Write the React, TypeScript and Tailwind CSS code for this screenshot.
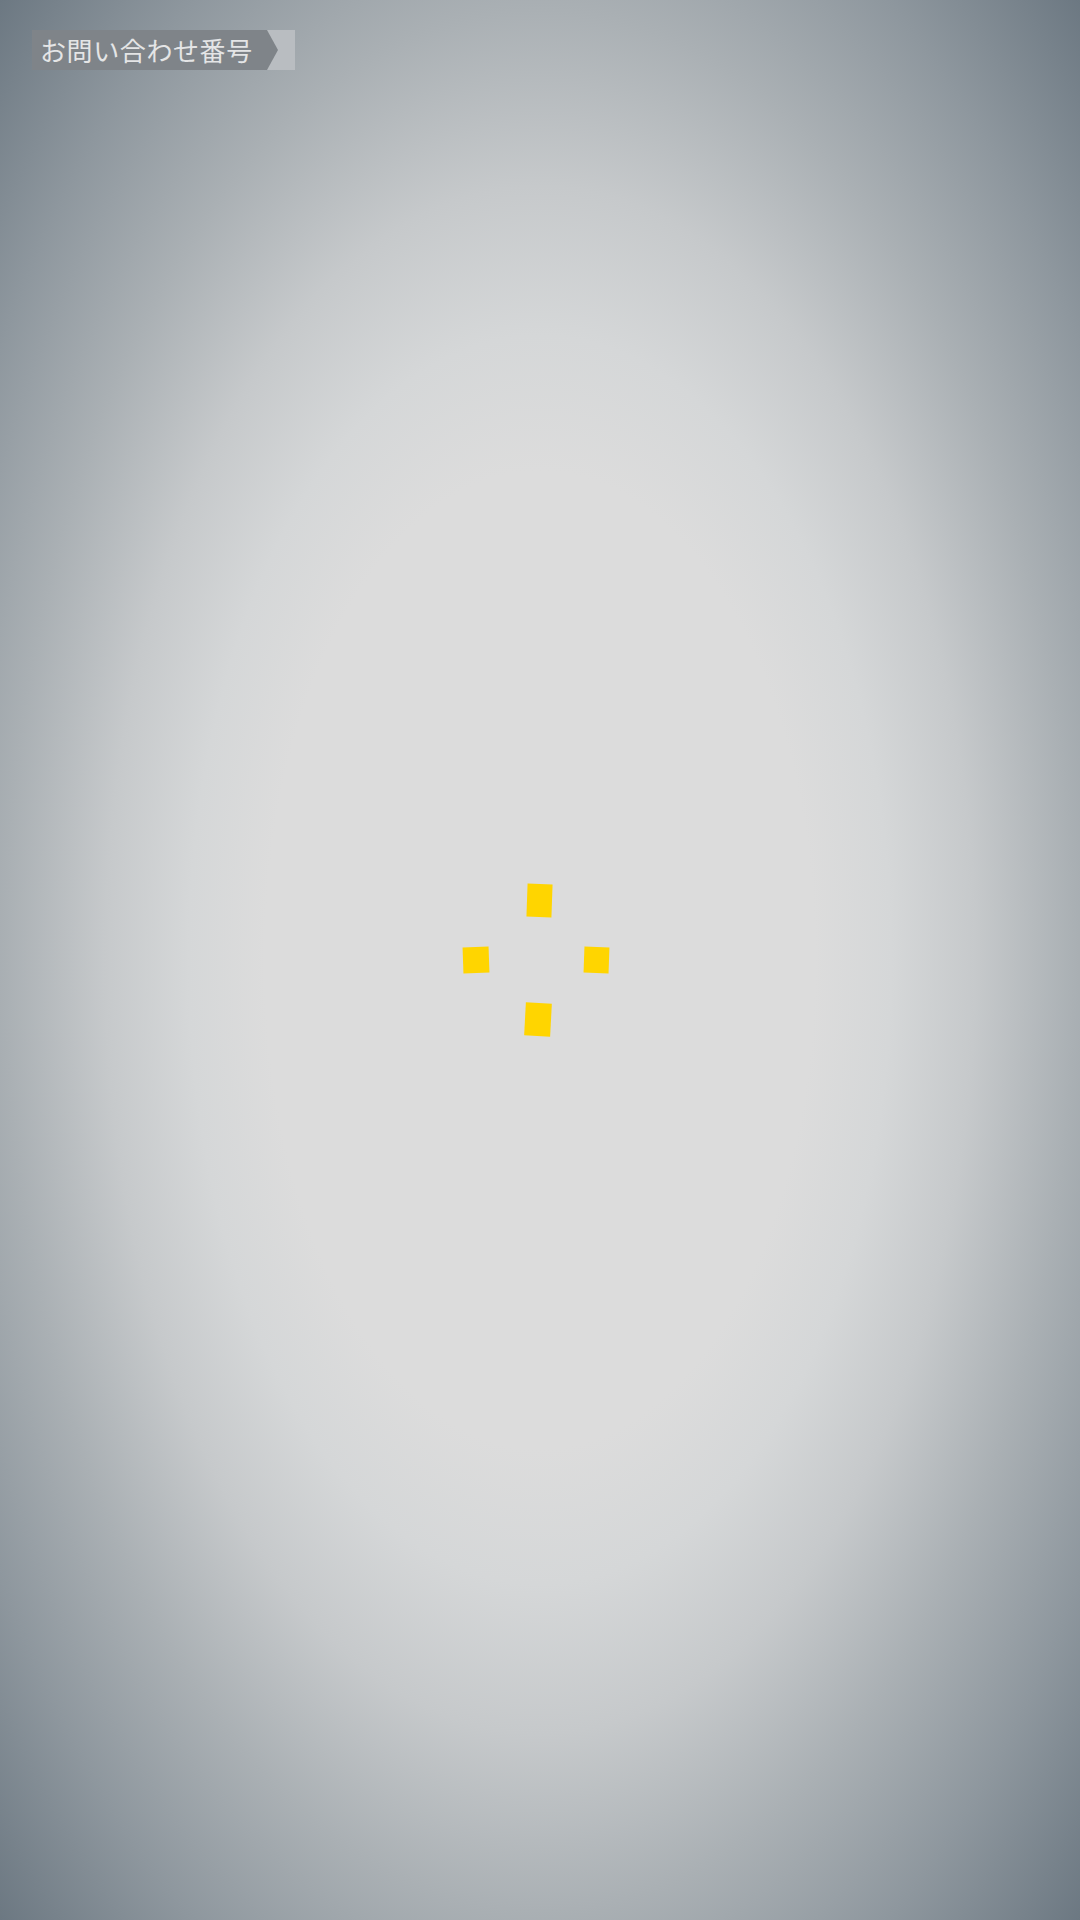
import React from 'react';

export default function App() {
  return (
    <div
      className="grid h-[1920px] w-[1080px] overflow-hidden"
      style={{
        background:
          'radial-gradient(ellipse farthest-corner at 50% 50%, #dcdcdc 0%, #dcdcdc 36%, #d5d7d8 46%, #c6c9cb 57%, #aab0b4 70%, #8e979e 84%, #6c7882 100%)',
      }}
    >
      {/* inquiry number tag */}
      <div className="col-start-1 row-start-1 ml-[32px] mt-[30px] flex h-[40px] w-[263px] self-start justify-self-start bg-[#b9bdc1]">
        <div className="flex h-full w-[235px] items-center bg-[#7f8489] pl-[8px]">
          <span
            className="whitespace-nowrap text-[26px] leading-none tracking-[0.6px] text-[#e4e5e6]"
            style={{ fontFamily: '"Noto Sans CJK JP", "Noto Sans", sans-serif' }}
          >
            お問い合わせ番号
          </span>
        </div>
        <div className="h-0 w-0 border-y-[20px] border-l-[11px] border-y-transparent border-l-[#7f8489]" />
      </div>

      {/* loading spinner */}
      <div className="col-start-1 row-start-1 mr-[8px] flex w-[146px] flex-col items-center gap-[30px] self-center justify-self-center">
        <div className="ml-[7px] h-[33px] w-[25px] rotate-[2deg] bg-[#ffd500]" />
        <div className="flex w-full items-center justify-between">
          <div className="h-[26px] w-[26px] rotate-[-2deg] bg-[#ffd500]" />
          <div className="h-[26px] w-[25px] rotate-[2deg] bg-[#ffd500]" />
        </div>
        <div className="ml-[4px] h-[33px] w-[26px] rotate-[3deg] bg-[#ffd500]" />
      </div>
    </div>
  );
}
